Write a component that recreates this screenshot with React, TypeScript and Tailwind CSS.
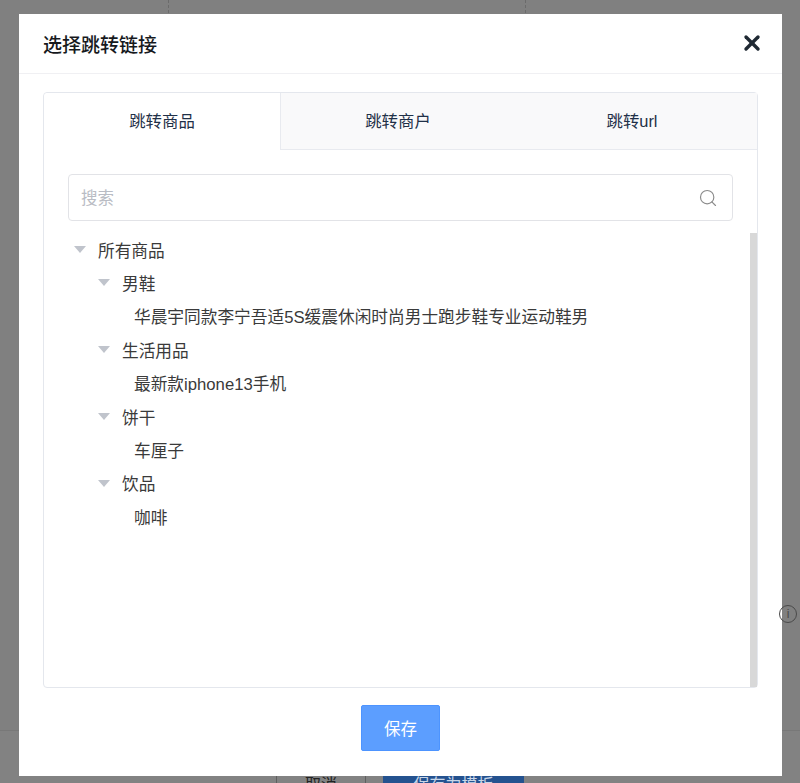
import { Search, X } from "lucide-react";

const font = "font-['Liberation_Sans','Noto_Sans_CJK_SC',sans-serif]";

const tree = [
  { label: "男鞋", items: ["华晨宇同款李宁吾适5S缓震休闲时尚男士跑步鞋专业运动鞋男"] },
  { label: "生活用品", items: ["最新款iphone13手机"] },
  { label: "饼干", items: ["车厘子"] },
  { label: "饮品", items: ["咖啡"] },
];

function Caret() {
  return (
    <svg width="12" height="7" viewBox="0 0 12 7" className="mb-[3px] shrink-0">
      <path d="M0 0h12L6 7z" fill="#c0c4cc" />
    </svg>
  );
}

function Row({ indent, caret, label }: { indent: string; caret?: boolean; label: string }) {
  return (
    <div className={`flex h-[33.4px] items-center ${indent}`}>
      {caret && <Caret />}
      <span className={caret ? "ml-3" : ""}>{label}</span>
    </div>
  );
}

export default function App() {
  return (
    <div className={`relative flex h-[783px] w-[800px] flex-col overflow-hidden bg-[#808080] ${font}`}>
      {/* page behind the mask */}
      <div className="flex h-[730px] shrink-0 pl-[168px]">
        <div className="h-full border-l border-dashed border-[#6b6b6b]" />
        <div className="ml-[356px] h-full border-l border-dashed border-[#6b6b6b]" />
      </div>
      <div className="flex h-[53px] shrink-0 items-start justify-center border-t border-[#787878] bg-[#828282] pt-[39px]">
        <div className="flex h-[30px] w-[90px] justify-center border-x border-[#5f5f5f] text-[16px] leading-[30px] text-[#222]">
          取消
        </div>
        <div className="ml-[17px] h-[30px] w-[141px] bg-[#24528f] text-center text-[16px] leading-[30px] text-[#c8d6e8]">
          保存为模板
        </div>
      </div>

      {/* dialog */}
      <div className="absolute left-[19px] top-[14px] flex h-[762px] w-[763px] flex-col bg-white">
        <div className="flex h-[60px] items-center justify-between border-b border-[#f0f0f3] pl-[24px] pr-[18px]">
          <h2 className="pt-[5px] text-[19px] font-medium text-[#16191d]">选择跳转链接</h2>
          <X size={24} strokeWidth={3.4} className="mb-[2px] text-[#1f2933]" />
        </div>

        <div className="mx-[24px] mt-[18px] flex h-[596px] flex-col rounded border border-[#e4e7ed]">
          <div className="flex h-[57px] text-[16.4px] text-[#1f3048]">
            <div className="flex w-[236px] items-center justify-center rounded-tl border-b border-transparent bg-white pt-[1px]">跳转商品</div>
            <div className="flex w-[235px] items-center justify-center border-b border-l border-[#e8eaef] bg-[#f9f9fa] pt-[1px]">跳转商户</div>
            <div className="flex flex-1 items-center justify-center border-b border-[#e8eaef] bg-[#f9f9fa] pr-[8px] pt-[1px]">跳转url</div>
          </div>

          <div className="flex min-h-0 flex-1 flex-col">
            <div className="mx-[24px] mt-[24px] flex h-[47px] items-center justify-between rounded border border-[#e2e3e7] pl-[12px] pr-[14px]">
              <span className="pt-[1px] text-[16.5px] text-[#b9bcc4]">搜索</span>
              <Search size={20} strokeWidth={1.4} className="mt-[1px] text-[#8b8b8b]" />
            </div>

            <div className="flex min-h-0 flex-1">
              <div className="flex-1 pl-[30px] pt-[13.4px] text-[16.7px] text-[#3a3a3a]">
                <Row indent="" caret label="所有商品" />
                {tree.map((g) => (
                  <div key={g.label}>
                    <Row indent="pl-[24px]" caret label={g.label} />
                    {g.items.map((it) => (
                      <Row key={it} indent="pl-[60px]" label={it} />
                    ))}
                  </div>
                ))}
              </div>
              <div className="mt-[12px] w-[7px] bg-[#d8d8d8]" />
            </div>
          </div>
        </div>

        <div className="flex flex-1 items-start justify-center pt-[17px]">
          <button className="h-[46px] w-[79px] rounded-[2px] border border-[#4d94ff] bg-[#5c9eff] pt-[2px] text-[16.5px] text-white">
            保存
          </button>
        </div>
      </div>

      {/* info icon peeking out beside the dialog */}
      <div className="absolute left-[779px] top-[605px] flex h-[18px] w-[18px] items-center justify-center rounded-full border border-[#4a4a4a] text-[12px] text-[#4a4a4a]">
        i
      </div>
    </div>
  );
}
